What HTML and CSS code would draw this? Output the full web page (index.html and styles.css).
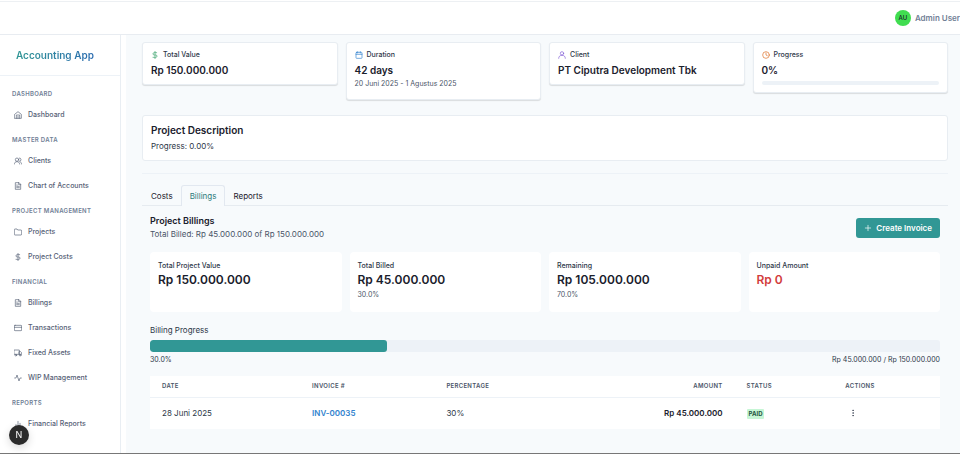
FILE: index.html
```html
<!DOCTYPE html>
<html lang="en">

<head>
  <meta charset="UTF-8">
  <meta name="viewport" content="width=device-width, initial-scale=1.0">
  <title>Accounting App</title>
  <link rel="stylesheet" href="styles.css">
</head>

<body>
  <!-- Icon set -->
  <svg class="sprite" aria-hidden="true">
    <symbol id="home" viewBox="0 0 24 24"><path d="M2 10 12 2l10 8v12H2z"/><path d="M7 22V12h10v10M12 16v6"/></symbol>
    <symbol id="users" viewBox="0 0 24 24"><circle cx="9" cy="8" r="5"/><path d="M1 21c0-4 3-7 8-7s8 3 8 7M16 3a5 5 0 0 1 0 10M19 15c3 1 4 3 4 6"/></symbol>
    <symbol id="file" viewBox="0 0 24 24"><path d="M14 2H4v20h16V8zM14 2v6h6M8 13h8M8 17h8M8 9h2"/></symbol>
    <symbol id="folder" viewBox="0 0 24 24"><path d="M23 19a2 2 0 0 1-2 2H3a2 2 0 0 1-2-2V5a2 2 0 0 1 2-2h6l2 3h10a2 2 0 0 1 2 2z"/></symbol>
    <symbol id="dollar" viewBox="0 0 24 24"><path d="M12 1v22M17 5H9.500a3.500 3.500 0 0 0 0 7h5a3.500 3.500 0 0 1 0 7H6"/></symbol>
    <symbol id="card" viewBox="0 0 24 24"><rect x="1" y="4" width="22" height="16" rx="2"/><path d="M1 10h22"/></symbol>
    <symbol id="truck" viewBox="0 0 24 24"><path d="M1 3h15v13H1zM16 8h4l3 3v5h-7z"/><circle cx="5.500" cy="18.500" r="2.500"/><circle cx="18.500" cy="18.500" r="2.500"/></symbol>
    <symbol id="activity" viewBox="0 0 24 24"><path d="M22 12h-4l-3 9L9 3l-3 9H2"/></symbol>
    <symbol id="chart" viewBox="0 0 24 24"><path d="M18 20V10M12 20V4M6 20v-6"/></symbol>
    <symbol id="calendar" viewBox="0 0 24 24"><rect x="3" y="4" width="18" height="18" rx="2"/><path d="M16 2v4M8 2v4M3 10h18"/></symbol>
    <symbol id="user" viewBox="0 0 24 24"><circle cx="12" cy="7" r="5"/><path d="M2 22c0-6 4-9 10-9s10 3 10 9"/></symbol>
    <symbol id="clock" viewBox="0 0 24 24"><circle cx="12" cy="12" r="10"/><path d="M12 6v6l4 2"/></symbol>
    <symbol id="plus" viewBox="0 0 24 24"><path d="M12 4v16M4 12h16"/></symbol>
    <symbol id="more" viewBox="0 0 24 24"><circle cx="12" cy="4" r="1"/><circle cx="12" cy="12" r="1"/><circle cx="12" cy="20" r="1"/></symbol>
  </svg>

  <div class="app">
    <header class="topbar">
      <button class="user-menu">
        <span class="avatar">AU</span>
        <span class="user-name">Admin User</span>
      </button>
    </header>

    <div class="layout">
      <aside class="sidebar">
        <div class="brand"><a href="#">Accounting App</a></div>
        <nav class="nav">
          <section class="nav-group">
            <h2>Dashboard</h2>
            <a href="#"><svg class="icon"><use href="#home"/></svg>Dashboard</a>
          </section>
          <section class="nav-group">
            <h2>Master Data</h2>
            <a href="#"><svg class="icon"><use href="#users"/></svg>Clients</a>
            <a href="#"><svg class="icon"><use href="#file"/></svg>Chart of Accounts</a>
          </section>
          <section class="nav-group">
            <h2>Project Management</h2>
            <a href="#"><svg class="icon"><use href="#folder"/></svg>Projects</a>
            <a href="#"><svg class="icon"><use href="#dollar"/></svg>Project Costs</a>
          </section>
          <section class="nav-group">
            <h2>Financial</h2>
            <a href="#"><svg class="icon"><use href="#file"/></svg>Billings</a>
            <a href="#"><svg class="icon"><use href="#card"/></svg>Transactions</a>
            <a href="#"><svg class="icon"><use href="#truck"/></svg>Fixed Assets</a>
            <a href="#"><svg class="icon"><use href="#activity"/></svg>WIP Management</a>
          </section>
          <section class="nav-group">
            <h2>Reports</h2>
            <a href="#"><svg class="icon"><use href="#chart"/></svg>Financial Reports</a>
          </section>
        </nav>
      </aside>

      <main class="content">
        <section class="summary">
          <div class="card">
            <div class="card-label"><svg class="icon green"><use href="#dollar"/></svg>Total Value</div>
            <div class="card-value">Rp 150.000.000</div>
          </div>
          <div class="card">
            <div class="card-label"><svg class="icon blue"><use href="#calendar"/></svg>Duration</div>
            <div class="card-value">42 days</div>
            <div class="card-note">20 Juni 2025 - 1 Agustus 2025</div>
          </div>
          <div class="card">
            <div class="card-label"><svg class="icon purple"><use href="#user"/></svg>Client</div>
            <div class="card-value">PT Ciputra Development Tbk</div>
          </div>
          <div class="card">
            <div class="card-label"><svg class="icon orange"><use href="#clock"/></svg>Progress</div>
            <div class="card-value">0%</div>
            <div class="card-track"></div>
          </div>
        </section>

        <section class="description">
          <h2>Project Description</h2>
          <p>Progress: 0.00%</p>
        </section>

        <div class="tabs" role="tablist">
          <button class="tab" role="tab">Costs</button>
          <button class="tab active" role="tab" aria-selected="true">Billings</button>
          <button class="tab" role="tab">Reports</button>
        </div>

        <section class="panel" role="tabpanel">
          <div class="panel-head">
            <div>
              <h2>Project Billings</h2>
              <p>Total Billed: Rp 45.000.000 of Rp 150.000.000</p>
            </div>
            <button class="create"><svg class="icon"><use href="#plus"/></svg>Create Invoice</button>
          </div>

          <div class="stats">
            <div class="stat">
              <div class="stat-label">Total Project Value</div>
              <div class="stat-value">Rp 150.000.000</div>
            </div>
            <div class="stat">
              <div class="stat-label">Total Billed</div>
              <div class="stat-value">Rp 45.000.000</div>
              <div class="stat-help">30.0%</div>
            </div>
            <div class="stat">
              <div class="stat-label">Remaining</div>
              <div class="stat-value">Rp 105.000.000</div>
              <div class="stat-help">70.0%</div>
            </div>
            <div class="stat">
              <div class="stat-label">Unpaid Amount</div>
              <div class="stat-value red">Rp 0</div>
            </div>
          </div>

          <div class="progress">
            <div class="progress-title">Billing Progress</div>
            <div class="progress-track">
              <div class="progress-fill" style="width: 30%"></div>
            </div>
            <div class="progress-legend">
              <span>30.0%</span>
              <span>Rp 45.000.000 / Rp 150.000.000</span>
            </div>
          </div>

          <table class="invoices">
            <thead>
              <tr>
                <th class="col-date">Date</th>
                <th class="col-invoice">Invoice #</th>
                <th class="col-percent">Percentage</th>
                <th class="col-amount">Amount</th>
                <th class="col-status">Status</th>
                <th>Actions</th>
              </tr>
            </thead>
            <tbody>
              <tr>
                <td>28 Juni 2025</td>
                <td><a href="#">INV-00035</a></td>
                <td>30%</td>
                <td class="col-amount">Rp 45.000.000</td>
                <td><span class="badge">Paid</span></td>
                <td><button class="more" aria-label="Actions"><svg class="icon"><use href="#more"/></svg></button></td>
              </tr>
            </tbody>
          </table>
        </section>
      </main>
    </div>

    <button class="dev-button">N</button>
  </div>
</body>

</html>
```

FILE: styles.css
```css
/* styles.css */
* {
  box-sizing: border-box;
}

body {
  margin: 0;
  font-family: Inter, "Liberation Sans", sans-serif;
  font-size: 8px;
  line-height: 12px;
  color: #1a202c;
  background: #fff;
}

h2,
p {
  margin: 0;
}

a {
  color: inherit;
  text-decoration: none;
}

button {
  font: inherit;
  color: inherit;
  background: none;
  border: none;
  padding: 0;
  cursor: pointer;
}

.sprite {
  display: none;
}

.icon {
  width: 8px;
  height: 8px;
  flex-shrink: 0;
  fill: none;
  stroke: currentColor;
  stroke-width: 2;
  stroke-linecap: round;
  stroke-linejoin: round;
}

.app {
  display: flex;
  flex-direction: column;
  height: 100vh;
  overflow: hidden;
  border-bottom: 1px solid #777;
}

/* Top bar */
.topbar {
  display: flex;
  justify-content: flex-end;
  flex-shrink: 0;
  margin-top: 1px;
  height: 34px;
  border-top: 1px solid #edf0f3;
  border-bottom: 1px solid #e8ecf1;
}

.user-menu {
  display: flex;
  align-items: center;
  gap: 4px;
  font-weight: 600;
  color: #718096;
  white-space: nowrap;
}

.avatar {
  width: 16px;
  height: 16px;
  border-radius: 50%;
  background: #40dd50;
  color: #1a202c;
  font-size: 6px;
  font-weight: 500;
  line-height: 16px;
}

.layout {
  display: flex;
  flex: 1;
  min-height: 0;
}

/* Sidebar */
.sidebar {
  width: 121px;
  flex-shrink: 0;
  border-right: 1px solid #e9eef3;
}

.brand {
  padding: 12px 16px;
  font-size: 10px;
  font-weight: 600;
  line-height: 16px;
  border-bottom: 1px solid #edf2f7;
}

.brand a {
  background: linear-gradient(to right, #319795, #2b6cb0);
  background-clip: text;
  color: transparent;
}

.nav {
  padding-top: 12px;
}

.nav-group {
  padding: 0 12px 5px;
}

.nav-group h2 {
  font-size: 6px;
  font-weight: 600;
  line-height: 12px;
  letter-spacing: 0.05em;
  text-transform: uppercase;
  color: #718096;
  white-space: nowrap;
}

.nav-group a {
  display: flex;
  align-items: center;
  gap: 6px;
  height: 21px;
  margin: 4px 0;
  padding-left: 2px;
  font-size: 7px;
  font-weight: 500;
  color: #566176;
}

/* Content */
.content {
  flex: 1;
  min-width: 0;
  margin-left: 5px;
  padding: 7px 12px 0 16px;
  background: #f7fafc;
}

.summary {
  display: grid;
  grid-template-columns: repeat(4, 1fr);
  align-items: start;
  gap: 8px;
  min-height: 73px;
}

.card,
.description {
  background: #fff;
  border: 1px solid #e8edf2;
  border-radius: 3px;
}

.card {
  padding: 6px 8px 5px;
  box-shadow: 0 1px 1px rgba(0, 0, 0, 0.12);
}

.card-label {
  display: flex;
  align-items: center;
  gap: 4px;
  font-size: 7px;
  font-weight: 500;
  line-height: 12px;
  color: #2d3748;
}

.card-value {
  font-size: 10px;
  font-weight: 600;
  line-height: 18px;
}

.card-note {
  margin-bottom: 5px;
  font-size: 7px;
  line-height: 10px;
  color: #4a5568;
}

.card-track {
  height: 4px;
  margin: 2px 0;
  border-radius: 2px;
  background: #edf2f7;
}

.green {
  color: #38a169;
}

.blue {
  color: #3182ce;
}

.purple {
  color: #805ad5;
}

.orange {
  color: #dd6b20;
}

.description {
  padding: 7px 8px;
  color: #2d3748;
}

.description h2 {
  font-size: 10px;
  font-weight: 600;
  line-height: 15px;
  color: #1a202c;
}

.description p {
  margin-top: 2px;
  line-height: 13px;
}

/* Tabs */
.tabs {
  display: flex;
  margin-top: 12px;
  padding-top: 11px;
  border-top: 1px solid #edf2f7;
  border-bottom: 1px solid #e6ebf0;
}

.tab {
  height: 21px;
  margin: 0 -1px -1px 0;
  padding: 0 8px;
  border: 1px solid transparent;
  border-bottom: none;
  border-radius: 3px 3px 0 0;
}

.tab.active {
  color: #2c7a7b;
  border-color: #e2e8f0;
  background: #f7fafc;
}

.panel {
  padding: 8px;
}

.panel-head {
  display: flex;
  justify-content: space-between;
  align-items: center;
  color: #4a5568;
}

.panel-head h2 {
  font-size: 9px;
  font-weight: 600;
  line-height: 13px;
  color: #1a202c;
}

.panel-head p {
  margin-top: 1px;
  line-height: 13px;
}

.create {
  display: flex;
  align-items: center;
  gap: 4px;
  height: 20px;
  padding: 0 8px;
  border-radius: 3px;
  background: #319795;
  color: #fff;
  font-weight: 600;
}

/* Billing totals */
.stats {
  display: grid;
  grid-template-columns: repeat(4, 1fr);
  gap: 8px;
  margin-top: 11px;
}

.stat {
  min-height: 60px;
  padding: 8px;
  border-radius: 4px;
  background: #fff;
}

.stat-label {
  font-size: 7px;
  font-weight: 500;
  color: #2d3748;
}

.stat-value {
  font-size: 12px;
  font-weight: 600;
  line-height: 16px;
}

.stat-value.red {
  color: #d23c3c;
}

.stat-help {
  margin-top: 1px;
  font-size: 7px;
  color: #4a5568;
}

.progress {
  margin-top: 12px;
  color: #2d3748;
}

.progress-track {
  height: 12px;
  margin: 4px 0 2px;
  border-radius: 3px;
  background: #edf2f7;
  overflow: hidden;
}

.progress-fill {
  height: 100%;
  border-radius: 3px;
  background: #319795;
}

.progress-legend {
  display: flex;
  justify-content: space-between;
  font-size: 7px;
}

/* Invoice table */
.invoices {
  width: 100%;
  margin-top: 10px;
  table-layout: fixed;
  border-collapse: collapse;
  background: #fff;
  color: #2d3748;
}

.invoices th,
.invoices td {
  padding: 0 12px;
  text-align: left;
}

.invoices th {
  height: 21px;
  border-bottom: 1px solid #edf2f7;
  font-size: 6px;
  font-weight: 600;
  letter-spacing: 0.05em;
  text-transform: uppercase;
  color: #4a5568;
}

.invoices td {
  height: 32px;
}

.invoices td a {
  color: #3182ce;
  font-weight: 600;
}

.col-date {
  width: 19%;
}

.col-invoice {
  width: 17%;
}

.col-percent {
  width: 20%;
}

.invoices .col-amount {
  width: 18%;
  text-align: right;
}

.invoices td.col-amount {
  color: #1a202c;
  font-weight: 600;
}

.col-status {
  width: 12.5%;
}

.badge {
  display: inline-block;
  padding: 0 2px;
  border-radius: 1px;
  background: #c6f6d5;
  color: #22543d;
  font-size: 6px;
  font-weight: 700;
  line-height: 10px;
  text-transform: uppercase;
}

.more {
  display: flex;
  padding: 4px;
}

/* Floating dev tools button */
.dev-button {
  position: fixed;
  left: 9px;
  bottom: 9px;
  width: 20px;
  height: 20px;
  border-radius: 50%;
  background: #2b2b2b;
  color: #fff;
  font-size: 9px;
  box-shadow: 0 3px 8px rgba(0, 0, 0, 0.15);
}
```
